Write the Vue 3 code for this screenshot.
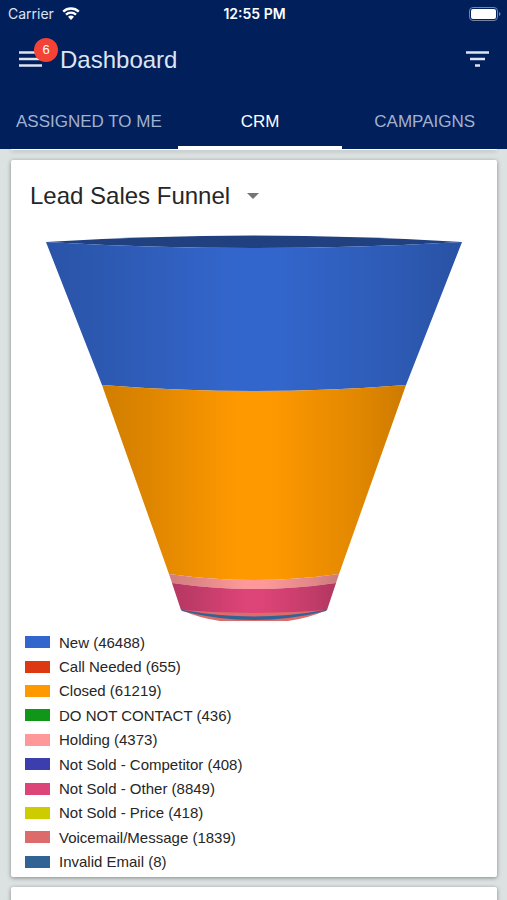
<script setup>
import { computed, ref } from "vue";

const tabs = ["ASSIGNED TO ME", "CRM", "CAMPAIGNS"];
const activeTab = ref("CRM");
const notifications = ref(6);

const charts = ["Lead Sales Funnel"];
const selectedChart = ref(charts[0]);

const statuses = [
  { name: "New", count: 46488, color: "#3366cc" },
  { name: "Call Needed", count: 655, color: "#dc3912" },
  { name: "Closed", count: 61219, color: "#ff9900" },
  { name: "DO NOT CONTACT", count: 436, color: "#109618" },
  { name: "Holding", count: 4373, color: "#ff9999" },
  { name: "Not Sold - Competitor", count: 408, color: "#3b3eac" },
  { name: "Not Sold - Other", count: 8849, color: "#dd4477" },
  { name: "Not Sold - Price", count: 418, color: "#cccc00" },
  { name: "Voicemail/Message", count: 1839, color: "#dd6b6b" },
  { name: "Invalid Email", count: 8, color: "#316395" },
];

// y and half width of the funnel at every visible boundary
const center = 243;
const bands = [
  { color: "#3366cc", y1: 22, w1: 208, y2: 165, w2: 152 },
  { color: "#ff9900", y1: 165, w1: 152, y2: 354, w2: 85 },
  { color: "#ff9999", y1: 354, w1: 85, y2: 363, w2: 82 },
  { color: "#dd4477", y1: 363, w1: 82, y2: 390, w2: 73 },
];

const segments = computed(() =>
  bands.map((b, i) => {
    // the last slice is flatter than the others
    const bulge = i === bands.length - 1 ? 6 : 12;
    return {
      color: b.color,
      d: [
        `M${center - b.w1} ${b.y1}`,
        `Q${center} ${b.y1 + 12} ${center + b.w1} ${b.y1}`,
        `L${center + b.w2} ${b.y2}`,
        `Q${center} ${b.y2 + bulge} ${center - b.w2} ${b.y2}Z`,
      ].join(""),
    };
  })
);
</script>

<template>
  <div class="screen">
    <header class="app-header">
      <div class="status-bar">
        <div class="carrier">
          <span>Carrier</span>
          <svg class="wifi" viewBox="0 0 18 13" aria-hidden="true">
            <path d="M1.2 4.6a11.4 11.4 0 0 1 15.6 0" />
            <path d="M4 7.6a7.3 7.3 0 0 1 10 0" />
            <path class="dot" d="M6 9.8a4.4 4.4 0 0 1 6 0L9 12.9Z" />
          </svg>
        </div>
        <span class="clock">12:55 PM</span>
        <svg class="battery" viewBox="0 0 32 14" aria-hidden="true">
          <rect class="shell" x="0.5" y="0.5" width="28" height="13" rx="3.5" />
          <rect x="2" y="2" width="25" height="10" rx="2" />
          <path class="nub" d="M30 5v4q1.500-.6 1.500-2t-1.500-2Z" />
        </svg>
      </div>

      <div class="toolbar">
        <button class="menu-button" type="button" aria-label="Menu">
          <svg viewBox="0 0 24 18" aria-hidden="true">
            <path d="M1 1.500h23M1 8h23M1 14.500h23" />
          </svg>
          <span class="badge">{{ notifications }}</span>
        </button>
        <h1>Dashboard</h1>
        <button class="filter-button" type="button" aria-label="Filter">
          <svg viewBox="0 0 24 18" aria-hidden="true">
            <path d="M1 1.500h23M5 8h15M10 14.500h5" />
          </svg>
        </button>
      </div>

      <nav class="tabs" role="tablist">
        <button
          v-for="tab in tabs"
          :key="tab"
          type="button"
          role="tab"
          class="tab"
          :class="{ active: tab === activeTab }"
          :aria-selected="tab === activeTab"
          @click="activeTab = tab"
        >
          {{ tab }}
        </button>
      </nav>
    </header>

    <main>
      <section class="card card-above"></section>

      <section class="card">
        <div class="card-title">
          <div class="chart-picker">
            <select v-model="selectedChart" aria-label="Chart">
              <option v-for="chart in charts" :key="chart">{{ chart }}</option>
            </select>
            <svg class="arrow" viewBox="0 0 12 6" aria-hidden="true">
              <path d="M0 0h12L6 6Z" />
            </svg>
          </div>
        </div>

        <svg class="funnel" viewBox="0 0 486 410" role="img" aria-label="Lead Sales Funnel">
          <defs>
            <linearGradient id="shade">
              <stop offset="0" stop-color="#000" stop-opacity="0.18" />
              <stop offset="0.15" stop-color="#000" stop-opacity="0.13" />
              <stop offset="0.45" stop-color="#000" stop-opacity="0" />
              <stop offset="0.55" stop-color="#000" stop-opacity="0" />
              <stop offset="0.85" stop-color="#000" stop-opacity="0.12" />
              <stop offset="1" stop-color="#000" stop-opacity="0.2" />
            </linearGradient>
          </defs>
          <!-- thin slices at the bottom -->
          <path fill="#dd6b6b" d="M170 390Q188 398 209 401H277Q298 398 316 390Z" />
          <path fill="#316395" d="M170 389L171 391Q243 409 315 391L316 389Z" />
          <path fill="#dd6b6b" d="M172 390Q243 403 314 390Z" />
          <!-- inside of the rim -->
          <path fill="#204080" d="M35 22Q243 9 451 22Q243 34 35 22Z" />
          <g v-for="segment in segments" :key="segment.color">
            <path :fill="segment.color" :d="segment.d" />
            <path fill="url(#shade)" :d="segment.d" />
          </g>
        </svg>

        <ul class="legend">
          <li v-for="status in statuses" :key="status.name">
            <span class="swatch" :style="{ backgroundColor: status.color }"></span>
            <span>{{ status.name }} ({{ status.count }})</span>
          </li>
        </ul>
      </section>

      <section class="card card-below"></section>
    </main>
  </div>
</template>

<style>
body {
  background: #dce1e2;
}
</style>

<style scoped>
.screen {
  height: 100vh;
  overflow: hidden;
  display: flex;
  flex-direction: column;
  background: #dce1e2;
  color: #262626;
  font-family: "Liberation Sans", Arial, sans-serif;
}

button,
select {
  font-family: inherit;
  color: inherit;
  background: none;
  border: none;
  margin: 0;
  padding: 0;
  cursor: pointer;
}

.app-header {
  position: relative;
  z-index: 1;
  flex: none;
  background: #001f5b;
  color: #dde4f2;
}

.status-bar {
  display: grid;
  grid-template-columns: 1fr auto 1fr;
  align-items: center;
  height: 27px;
  padding: 0 6px 0 8px;
  font-family: Inter, sans-serif;
  font-size: 14px;
}

.carrier {
  display: flex;
  align-items: center;
  gap: 8px;
}

.wifi {
  width: 18px;
  height: 13px;
  fill: none;
  stroke: #fff;
  stroke-width: 2.4;
}

.wifi .dot {
  fill: #fff;
  stroke: none;
}

.clock {
  color: #fff;
  font-weight: 600;
}

.battery {
  justify-self: end;
  width: 32px;
  height: 14px;
  fill: #fff;
}

.battery .shell {
  fill: none;
  stroke: #7485a8;
}

.battery .nub {
  fill: #7485a8;
}

.toolbar {
  display: flex;
  align-items: center;
  height: 65px;
  padding: 0 18px;
}

.toolbar svg {
  display: block;
  width: 24px;
  height: 18px;
  stroke: currentColor;
  stroke-width: 2.3;
}

.menu-button {
  position: relative;
  margin-right: 18px;
}

.badge {
  position: absolute;
  top: -13px;
  left: 16px;
  width: 24px;
  height: 24px;
  border-radius: 50%;
  background: #f44336;
  color: #fff;
  font-size: 13px;
  line-height: 24px;
  text-align: center;
}

h1 {
  flex: 1;
  margin: 0;
  font-size: 24px;
  font-weight: 400;
  line-height: 32px;
}

.tabs {
  display: grid;
  grid-template-columns: auto 1fr 1fr;
}

.tab {
  position: relative;
  height: 57px;
  padding: 2px 16px 0;
  font-size: 17px;
  color: #a3b1d0;
}

.tab.active {
  color: #fff;
}

.tab.active::after {
  content: "";
  position: absolute;
  left: 0;
  right: 0;
  bottom: -1px;
  height: 4px;
  background: #fff;
}

main {
  flex: 1;
  display: flex;
  flex-direction: column;
  gap: 10px;
  padding: 0 10px 0 11px;
  min-height: 0;
}

.card {
  flex: none;
  background: #fff;
  border-radius: 2px;
  box-shadow: 0 1px 4px rgba(0, 0, 0, 0.4);
}

.card-above {
  height: 1px;
}

.card-below {
  height: 60px;
}

.card-title {
  display: flex;
  height: 60px;
  padding: 0 19px;
}

.chart-picker {
  display: grid;
  align-items: center;
  padding-top: 12px;
}

.chart-picker select {
  grid-area: 1 / 1;
  appearance: none;
  padding-right: 28px;
  font-size: 24px;
  line-height: 32px;
}

.arrow {
  grid-area: 1 / 1;
  justify-self: end;
  width: 12px;
  height: 6px;
  fill: #757575;
  pointer-events: none;
}

.funnel {
  display: block;
  width: 100%;
}

.legend {
  display: grid;
  grid-auto-rows: 1fr;
  min-height: 244px;
  margin: 0;
  padding: 0 14px 3px;
  list-style: none;
  font-size: 15px;
}

.legend li {
  display: flex;
  align-items: center;
  gap: 9px;
}

.swatch {
  width: 25px;
  height: 12px;
}
</style>
